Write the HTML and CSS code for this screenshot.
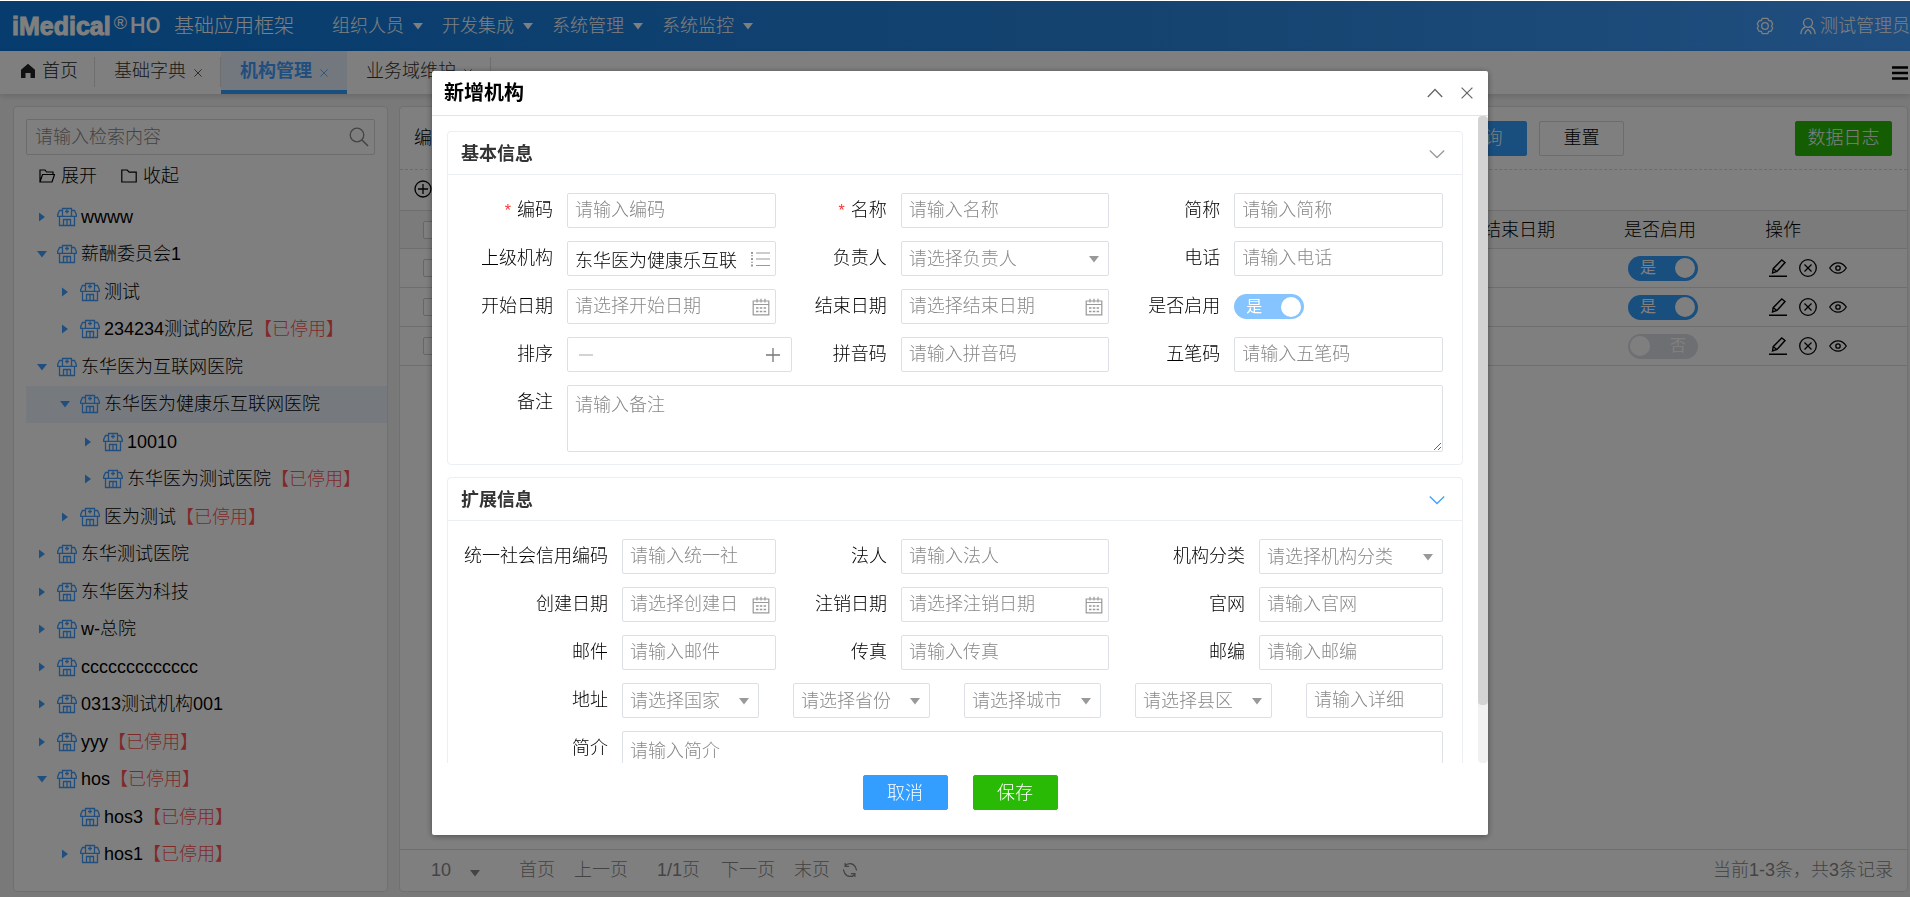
FILE: index.html
```html
<!DOCTYPE html>
<html lang="zh-CN">
<head>
<meta charset="utf-8">
<title>机构管理</title>
<link rel="stylesheet" href="styles.css">
</head>
<body>
<svg class="sprite" aria-hidden="true">
  <symbol id="i-hospital" viewBox="0 0 20 20"><path d="M5.500 7.500v-6h9v6M10 2.500v4M8 4.500h4M5.500 3.500H2.500L.7 7.500v1.800h18.600V7.500l-1.800-4h-3M5.500 7.500v1.800M14.500 7.500v1.800M2.500 9.500v9h15v-9M6.500 18.500v-6h7v6M10 12.500v6" fill="none" stroke="currentColor" stroke-width="1.300"/></symbol>
  <symbol id="i-right" viewBox="0 0 10 10"><path d="M2 .5 8 5 2 9.500z" fill="currentColor"/></symbol>
  <symbol id="i-down" viewBox="0 0 10 10"><path d="M0 2h10L5 8.500z" fill="currentColor"/></symbol>
  <symbol id="i-home" viewBox="0 0 16 16"><path d="M8 .8 1 6.800V15h4.500v-5h5v5H15V6.800z" fill="currentColor"/></symbol>
  <symbol id="i-x" viewBox="0 0 12 12"><path d="m.6.6 10.800 10.800M11.400.6.6 11.400" fill="none" stroke="currentColor" stroke-width="1.200"/></symbol>
  <symbol id="i-search" viewBox="0 0 20 20"><circle cx="8" cy="8" r="6.800" fill="none" stroke="currentColor" stroke-width="1.300"/><path d="m13 13 6 6" stroke="currentColor" stroke-width="1.600"/></symbol>
  <symbol id="i-open" viewBox="0 0 16 16"><path d="M1 14V2h5l1.500 2H14v2.500M1 14l2.500-7.500h12L13 14z" fill="none" stroke="currentColor" stroke-width="1.200"/></symbol>
  <symbol id="i-folder" viewBox="0 0 16 16"><path d="M.8 2h5.400l2 2.200h7V14H.8z" fill="none" stroke="currentColor" stroke-width="1.200"/></symbol>
  <symbol id="i-gear" viewBox="0 0 18 18"><path d="M6.300 1.300h5.400l1 2.200 2.300.3 1.700 3.200-1.200 2 1.200 2-1.700 3.200-2.300.3-1 2.200H6.300l-1-2.200-2.300-.3L1.300 11l1.200-2-1.200-2L3 3.800l2.300-.3z" fill="none" stroke="currentColor" stroke-width="1.300" stroke-linejoin="round"/><circle cx="9" cy="9" r="3.300" fill="none" stroke="currentColor" stroke-width="1.300"/></symbol>
  <symbol id="i-user" viewBox="0 0 18 20"><circle cx="9" cy="6.500" r="5" fill="none" stroke="currentColor" stroke-width="1.500"/><path d="M1 19c.2-3.500 2-6.500 5-8M17 19c-.2-3.500-2-6.500-5-8M5.500 19c.3-2 1.500-4 3.500-5 2 1 3.200 3 3.500 5" fill="none" stroke="currentColor" stroke-width="1.500"/></symbol>
  <symbol id="i-menu" viewBox="0 0 16 14"><path d="M0 1.500h16M0 7h16M0 12.500h16" stroke="currentColor" stroke-width="2.400"/></symbol>
  <symbol id="i-plus-c" viewBox="0 0 18 18"><circle cx="9" cy="9" r="8" fill="none" stroke="currentColor" stroke-width="1.300"/><path d="M9 4v10M4 9h10" stroke="currentColor" stroke-width="1.300"/></symbol>
  <symbol id="i-edit" viewBox="0 0 18 18"><path d="m3.500 14 .7-4.300L12.800 1l3.200 2.500-8 9zM4.200 9.700 8 12.500M0 17.300h18" fill="none" stroke="currentColor" stroke-width="1.400"/></symbol>
  <symbol id="i-x-c" viewBox="0 0 18 18"><circle cx="9" cy="9" r="8.300" fill="none" stroke="currentColor" stroke-width="1.300"/><path d="m5.500 5.500 7 7M12.500 5.500l-7 7" stroke="currentColor" stroke-width="1.300"/></symbol>
  <symbol id="i-eye" viewBox="0 0 18 18"><path d="M.7 9C3 5.500 5.800 3.800 9 3.800S15 5.500 17.300 9C15 12.500 12.200 14.200 9 14.200S3 12.500.7 9z" fill="none" stroke="currentColor" stroke-width="1.300"/><circle cx="9" cy="9" r="2.200" fill="none" stroke="currentColor" stroke-width="1.300"/></symbol>
  <symbol id="i-refresh" viewBox="0 0 18 18"><path d="M14.800 13.500A7 7 0 0 1 3 12.500L1.500 8.500M3.200 4.500A7 7 0 0 1 15 5.500l1.500 4M3.500 1v4H8M14.500 17v-4H10" fill="none" stroke="currentColor" stroke-width="1.400"/></symbol>
  <symbol id="i-chev-up" viewBox="0 0 16 16"><path d="m.8 12 7.200-7.500L15.200 12" fill="none" stroke="currentColor" stroke-width="1.300"/></symbol>
  <symbol id="i-chev-down" viewBox="0 0 16 16"><path d="m.8 4.500 7.200 7 7.200-7" fill="none" stroke="currentColor" stroke-width="1.300"/></symbol>
  <symbol id="i-list" viewBox="0 0 20 18"><path d="M6 3h14M6 9h14M6 15.500h14" stroke="currentColor" stroke-width="1.200"/><path d="M1 2h2v2H1zM1 8h2v2H1zM1 14.500h2v2H1zM1 5.300h2v1H1zM1 11.700h2v1H1z" fill="currentColor"/></symbol>
  <symbol id="i-cal" viewBox="0 0 18 18"><path d="M1.200 3h15.600v13.800H1.200zM1.200 6.500h15.600M5 .8v3.700M9 .8v3.700M13 .8v3.700" fill="none" stroke="currentColor" stroke-width="1.200"/><path d="M4 10h2.500M7.800 10h2.500M11.600 10h2.500M4 13.500h2.500M7.800 13.500h2.500M11.600 13.500h2.500" stroke="currentColor" stroke-width="1.300"/></symbol>
  <symbol id="i-minus" viewBox="0 0 14 14"><path d="M0 7h14" stroke="currentColor" stroke-width="1.300"/></symbol>
  <symbol id="i-plus" viewBox="0 0 14 14"><path d="M0 7h14M7 0v14" stroke="currentColor" stroke-width="1.300"/></symbol>
</svg>

<header class="topbar">
  <div class="brand"><span class="brand-name">iMedical</span><span class="brand-mark">®</span><span class="brand-suffix">HO</span></div>
  <h1 class="app-title">基础应用框架</h1>
  <nav class="main-nav">
    <button class="nav-item">组织人员<svg class="caret"><use href="#i-down"/></svg></button>
    <button class="nav-item">开发集成<svg class="caret"><use href="#i-down"/></svg></button>
    <button class="nav-item">系统管理<svg class="caret"><use href="#i-down"/></svg></button>
    <button class="nav-item">系统监控<svg class="caret"><use href="#i-down"/></svg></button>
  </nav>
  <button class="nav-item settings" aria-label="设置"><svg class="icon18"><use href="#i-gear"/></svg></button>
  <button class="nav-item user"><svg class="icon18"><use href="#i-user"/></svg>测试管理员</button>
</header>

<div class="tabs">
  <a class="tab tab-home" href="#"><svg class="icon16"><use href="#i-home"/></svg>首页</a>
  <a class="tab" href="#">基础字典<svg class="tab-x"><use href="#i-x"/></svg></a>
  <a class="tab active" href="#">机构管理<svg class="tab-x"><use href="#i-x"/></svg></a>
  <a class="tab" href="#">业务域维护<svg class="tab-x"><use href="#i-x"/></svg></a>
  <button class="tabs-menu" aria-label="菜单"><svg class="icon16"><use href="#i-menu"/></svg></button>
</div>

<main class="workspace">
  <aside class="panel tree-panel">
    <div class="search">
      <input class="search-input" type="text" placeholder="请输入检索内容" aria-label="检索">
      <svg class="icon20"><use href="#i-search"/></svg>
    </div>
    <div class="tree-tools">
      <button class="tool"><svg class="icon16"><use href="#i-open"/></svg>展开</button>
      <button class="tool"><svg class="icon16"><use href="#i-folder"/></svg>收起</button>
    </div>
    <ul class="tree">
      <li class="node"><svg class="arrow"><use href="#i-right"/></svg><svg class="icon20 org"><use href="#i-hospital"/></svg>wwww</li>
      <li class="node"><svg class="arrow"><use href="#i-down"/></svg><svg class="icon20 org"><use href="#i-hospital"/></svg>薪酬委员会1</li>
      <li class="node l1"><svg class="arrow"><use href="#i-right"/></svg><svg class="icon20 org"><use href="#i-hospital"/></svg>测试</li>
      <li class="node l1"><svg class="arrow"><use href="#i-right"/></svg><svg class="icon20 org"><use href="#i-hospital"/></svg>234234测试的欧尼<span class="off">【已停用】</span></li>
      <li class="node"><svg class="arrow"><use href="#i-down"/></svg><svg class="icon20 org"><use href="#i-hospital"/></svg>东华医为互联网医院</li>
      <li class="node l1 selected"><svg class="arrow"><use href="#i-down"/></svg><svg class="icon20 org"><use href="#i-hospital"/></svg>东华医为健康乐互联网医院</li>
      <li class="node l2"><svg class="arrow"><use href="#i-right"/></svg><svg class="icon20 org"><use href="#i-hospital"/></svg>10010</li>
      <li class="node l2"><svg class="arrow"><use href="#i-right"/></svg><svg class="icon20 org"><use href="#i-hospital"/></svg>东华医为测试医院<span class="off">【已停用】</span></li>
      <li class="node l1"><svg class="arrow"><use href="#i-right"/></svg><svg class="icon20 org"><use href="#i-hospital"/></svg>医为测试<span class="off">【已停用】</span></li>
      <li class="node"><svg class="arrow"><use href="#i-right"/></svg><svg class="icon20 org"><use href="#i-hospital"/></svg>东华测试医院</li>
      <li class="node"><svg class="arrow"><use href="#i-right"/></svg><svg class="icon20 org"><use href="#i-hospital"/></svg>东华医为科技</li>
      <li class="node"><svg class="arrow"><use href="#i-right"/></svg><svg class="icon20 org"><use href="#i-hospital"/></svg>w-总院</li>
      <li class="node"><svg class="arrow"><use href="#i-right"/></svg><svg class="icon20 org"><use href="#i-hospital"/></svg>ccccccccccccc</li>
      <li class="node"><svg class="arrow"><use href="#i-right"/></svg><svg class="icon20 org"><use href="#i-hospital"/></svg>0313测试机构001</li>
      <li class="node"><svg class="arrow"><use href="#i-right"/></svg><svg class="icon20 org"><use href="#i-hospital"/></svg>yyy<span class="off">【已停用】</span></li>
      <li class="node"><svg class="arrow"><use href="#i-down"/></svg><svg class="icon20 org"><use href="#i-hospital"/></svg>hos<span class="off">【已停用】</span></li>
      <li class="node l1"><svg class="arrow"></svg><svg class="icon20 org"><use href="#i-hospital"/></svg>hos3<span class="off">【已停用】</span></li>
      <li class="node l1"><svg class="arrow"><use href="#i-right"/></svg><svg class="icon20 org"><use href="#i-hospital"/></svg>hos1<span class="off">【已停用】</span></li>
    </ul>
  </aside>

  <section class="panel list-panel">
    <form class="query">
      <label class="query-field">编码<input class="ctl" type="text"></label>
      <button type="button" class="btn primary">查询</button>
      <button type="button" class="btn">重置</button>
      <button type="button" class="btn success log">数据日志</button>
    </form>
    <div class="list-tools"><button class="tool"><svg class="icon18"><use href="#i-plus-c"/></svg>新增</button></div>
    <div class="table-wrap">
      <table class="grid">
        <colgroup><col class="c-check"><col><col class="c-std"><col class="c-std"><col class="c-ops"></colgroup>
        <thead><tr><th class="check"><input class="box" type="checkbox" aria-label="全选"></th><th></th><th>结束日期</th><th>是否启用</th><th>操作</th></tr></thead>
        <tbody>
          <tr><td class="check"><input class="box" type="checkbox" aria-label="选择"></td><td></td><td></td>
            <td><label class="switch on"><input type="checkbox" checked><span>是</span><i></i></label></td>
            <td><div class="ops"><button aria-label="编辑"><svg class="icon18"><use href="#i-edit"/></svg></button><button aria-label="停用"><svg class="icon18"><use href="#i-x-c"/></svg></button><button aria-label="查看"><svg class="icon18"><use href="#i-eye"/></svg></button></div></td></tr>
          <tr><td class="check"><input class="box" type="checkbox" aria-label="选择"></td><td></td><td></td>
            <td><label class="switch on"><input type="checkbox" checked><span>是</span><i></i></label></td>
            <td><div class="ops"><button aria-label="编辑"><svg class="icon18"><use href="#i-edit"/></svg></button><button aria-label="停用"><svg class="icon18"><use href="#i-x-c"/></svg></button><button aria-label="查看"><svg class="icon18"><use href="#i-eye"/></svg></button></div></td></tr>
          <tr><td class="check"><input class="box" type="checkbox" aria-label="选择"></td><td></td><td></td>
            <td><label class="switch"><input type="checkbox"><i></i><span>否</span></label></td>
            <td><div class="ops"><button aria-label="编辑"><svg class="icon18"><use href="#i-edit"/></svg></button><button aria-label="停用"><svg class="icon18"><use href="#i-x-c"/></svg></button><button aria-label="查看"><svg class="icon18"><use href="#i-eye"/></svg></button></div></td></tr>
        </tbody>
      </table>
    </div>
    <footer class="pager">
      <span class="page-size"><select aria-label="每页条数"><option>10</option></select><svg class="caret"><use href="#i-down"/></svg></span>
      <button>首页</button><button>上一页</button><span class="page-now">1/1页</span><button>下一页</button><button>末页</button>
      <button class="reload" aria-label="刷新"><svg class="icon16"><use href="#i-refresh"/></svg></button>
      <span class="total">当前1-3条，共3条记录</span>
    </footer>
  </section>
</main>

<div class="overlay">
  <div class="dialog" role="dialog" aria-labelledby="dlg-title">
    <header class="dialog-head">
      <h2 id="dlg-title">新增机构</h2>
      <button aria-label="收起"><svg class="icon16"><use href="#i-chev-up"/></svg></button>
      <button aria-label="关闭"><svg class="icon12"><use href="#i-x"/></svg></button>
    </header>
    <div class="dialog-body">
      <form class="cards">
        <section class="card">
          <header class="card-head"><h3>基本信息</h3><svg class="icon16"><use href="#i-chev-down"/></svg></header>
          <div class="fields basic">
            <label for="code" class="req">编码</label><input id="code" class="ctl" type="text" placeholder="请输入编码">
            <label for="name" class="req">名称</label><input id="name" class="ctl" type="text" placeholder="请输入名称">
            <label for="short">简称</label><input id="short" class="ctl" type="text" placeholder="请输入简称">

            <label for="parent">上级机构</label><div class="combo"><input id="parent" class="ctl" type="text" value="东华医为健康乐互联网医院"><svg class="icon20"><use href="#i-list"/></svg></div>
            <label for="owner">负责人</label><div class="combo"><select id="owner" class="ctl"><option>请选择负责人</option></select><svg class="caret"><use href="#i-down"/></svg></div>
            <label for="tel">电话</label><input id="tel" class="ctl" type="text" placeholder="请输入电话">

            <label for="start">开始日期</label><div class="combo"><input id="start" class="ctl" type="text" placeholder="请选择开始日期"><svg class="icon18"><use href="#i-cal"/></svg></div>
            <label for="end">结束日期</label><div class="combo"><input id="end" class="ctl" type="text" placeholder="请选择结束日期"><svg class="icon18"><use href="#i-cal"/></svg></div>
            <label for="enabled">是否启用</label><label class="switch on soft"><input id="enabled" type="checkbox" checked disabled><span>是</span><i></i></label>

            <label for="sort">排序</label><div class="stepper"><button type="button" class="dim" aria-label="减少"><svg class="icon14"><use href="#i-minus"/></svg></button><input id="sort" type="text"><button type="button" aria-label="增加"><svg class="icon14"><use href="#i-plus"/></svg></button></div>
            <label for="py">拼音码</label><input id="py" class="ctl" type="text" placeholder="请输入拼音码">
            <label for="wb">五笔码</label><input id="wb" class="ctl" type="text" placeholder="请输入五笔码">

            <label for="memo">备注</label><textarea id="memo" class="ctl wide" placeholder="请输入备注"></textarea>
          </div>
        </section>
        <section class="card">
          <header class="card-head hot"><h3>扩展信息</h3><svg class="icon16"><use href="#i-chev-down"/></svg></header>
          <div class="fields extra">
            <label for="uscc">统一社会信用编码</label><input id="uscc" class="ctl" type="text" placeholder="请输入统一社会信用编码">
            <label for="legal">法人</label><input id="legal" class="ctl" type="text" placeholder="请输入法人">
            <label for="kind">机构分类</label><div class="combo"><select id="kind" class="ctl"><option>请选择机构分类</option></select><svg class="caret"><use href="#i-down"/></svg></div>

            <label for="created">创建日期</label><div class="combo"><input id="created" class="ctl" type="text" placeholder="请选择创建日期"><svg class="icon18"><use href="#i-cal"/></svg></div>
            <label for="closed">注销日期</label><div class="combo"><input id="closed" class="ctl" type="text" placeholder="请选择注销日期"><svg class="icon18"><use href="#i-cal"/></svg></div>
            <label for="site">官网</label><input id="site" class="ctl" type="text" placeholder="请输入官网">

            <label for="mail">邮件</label><input id="mail" class="ctl" type="text" placeholder="请输入邮件">
            <label for="fax">传真</label><input id="fax" class="ctl" type="text" placeholder="请输入传真">
            <label for="zip">邮编</label><input id="zip" class="ctl" type="text" placeholder="请输入邮编">

            <label for="country">地址</label>
            <div class="address wide">
              <div class="combo"><select id="country" class="ctl"><option>请选择国家</option></select><svg class="caret"><use href="#i-down"/></svg></div>
              <div class="combo"><select class="ctl" aria-label="省份"><option>请选择省份</option></select><svg class="caret"><use href="#i-down"/></svg></div>
              <div class="combo"><select class="ctl" aria-label="城市"><option>请选择城市</option></select><svg class="caret"><use href="#i-down"/></svg></div>
              <div class="combo"><select class="ctl" aria-label="县区"><option>请选择县区</option></select><svg class="caret"><use href="#i-down"/></svg></div>
              <input class="ctl" type="text" aria-label="详细地址" placeholder="请输入详细地址">
            </div>

            <label for="intro">简介</label><textarea id="intro" class="ctl wide" placeholder="请输入简介"></textarea>
          </div>
        </section>
      </form>
      <div class="scrollbar"><div class="thumb"></div></div>
    </div>
    <footer class="dialog-foot">
      <button class="btn primary">取消</button>
      <button class="btn success">保存</button>
    </footer>
  </div>
</div>
</body>
</html>
```
FILE: styles.css
```css
* { box-sizing: border-box; }

body {
  margin: 0;
  padding-top: 1px;
  height: 100vh;
  display: flex;
  flex-direction: column;
  overflow: hidden;
  background: #fff;
  color: #000;
  font: 300 18px/24px "Liberation Sans", "Noto Sans CJK SC", sans-serif;
}

button, input, select, textarea { font: inherit; color: inherit; }
button { border: 0; padding: 0; background: none; cursor: pointer; }
h1, h2, h3, ul { margin: 0; padding: 0; }
svg { display: block; flex: none; }
a { color: inherit; text-decoration: none; }

.sprite { position: absolute; width: 0; height: 0; }
.icon12 { width: 12px; height: 12px; }
.icon14 { width: 14px; height: 14px; }
.icon16 { width: 16px; height: 16px; }
.icon18 { width: 18px; height: 18px; }
.icon20 { width: 20px; height: 20px; }
.caret { width: 10px; height: 10px; }

/* top bar */
.topbar {
  flex: none;
  height: 50px;
  display: flex;
  align-items: center;
  padding: 0 0 0 12px;
  color: #fff;
  background: linear-gradient(90deg, #0c78dc, #2a87e0 60%, #409eff);
}
.brand { display: flex; align-items: center; width: 162px; }
.brand-name { font: 900 25px/24px "Liberation Sans", sans-serif; -webkit-text-stroke: 1px #fff; }
.brand-mark { font-size: 18px; line-height: 18px; align-self: flex-start; margin-left: 3px; }
.brand-suffix { font: 500 22px/24px Roboto, sans-serif; margin-left: 3px; }
.app-title { font-size: 20px; font-weight: 300; width: 158px; }
.main-nav { display: flex; flex: 1; }
.nav-item { display: flex; align-items: center; gap: 9px; width: 110px; }
.settings { width: 43px; }
.user { width: auto; gap: 3px; }

/* page tabs */
.tabs {
  flex: none;
  height: 43px;
  display: flex;
  align-items: stretch;
  background: #fff;
  box-shadow: 0 2px 6px rgba(0, 0, 0, .15);
  color: #333;
  position: relative;
}
.tab {
  display: flex;
  align-items: center;
  gap: 8px;
  padding: 0 19px;
  border-bottom: 4px solid transparent;
  background: linear-gradient(#ddd, #ddd) right 6px / 1px 30px no-repeat;
}
.tab-home { gap: 6px; color: #222; padding: 0 17px 0 20px; }
.tab-x { width: 8px; height: 8px; margin-top: 4px; }
.tab.active { color: #409eff; font-weight: 700; background: #e6f1fd; border-bottom-color: #339eff; }
.tabs-menu { margin: 0 2px 0 auto; color: #000; }

/* workspace */
.workspace {
  flex: 1;
  min-height: 0;
  display: flex;
  gap: 11px;
  padding: 12px 2px 5px 13px;
  background: #f3f3f3;
}
.panel { display: flex; flex-direction: column; background: #fff; border: 1px solid #e0e0e0; border-radius: 4px; }
.tree-panel { flex: none; width: 375px; padding: 12px 0 18px 12px; }
.search { display: flex; align-items: center; height: 36px; margin-right: 12px; padding: 0 5px 0 8px; border: 1px solid #d8d8d8; border-radius: 2px; color: #888; }
.search-input { flex: 1; min-width: 0; border: 0; padding: 0; background: none; outline: 0; }
.search-input::placeholder { color: #888; opacity: 1; }
.tree-tools { display: flex; gap: 24px; padding: 9px 0 10px 13px; }
.tool { display: flex; align-items: center; gap: 6px; white-space: nowrap; }
.tree { flex: 1; display: grid; grid-auto-rows: 1fr; list-style: none; }
.node { display: flex; align-items: center; padding-left: 11px; white-space: nowrap; }
.node.l1 { padding-left: 34px; }
.node.l2 { padding-left: 57px; }
.node.selected { background: #edf5ff; }
.arrow { width: 10px; height: 10px; margin-right: 10px; color: #409eff; }
.org { margin-right: 4px; color: #409eff; }
.off { color: #ff5252; }

.list-panel { flex: 1; min-width: 0; }
.query { display: flex; align-items: center; height: 63px; padding: 0 15px 0 14px; border-bottom: 1px dashed #d8d8d8; }
.query-field { flex: 1; display: flex; align-items: center; gap: 14px; margin-right: 40px; white-space: nowrap; }
.btn { flex: none; width: 85px; height: 35px; border: 1px solid #d8d8d8; border-radius: 2px; }
.btn + .btn { margin-left: 12px; }
.btn.primary { background: #339eff; border-color: #339eff; color: #fff; }
.btn.success { background: #28ba05; border-color: #28ba05; color: #fff; }
.btn.log { width: 97px; margin-left: 171px; }
.list-tools { display: flex; align-items: center; height: 40px; padding: 0 14px 2px; }
.table-wrap { flex: 1; }
.grid { width: 100%; table-layout: fixed; border-collapse: collapse; border-top: 1px solid #dcdcdc; }
.c-check { width: 61px; }
.c-std { width: 141px; }
.c-ops { width: 150px; }
.grid th { height: 38px; padding: 0 8px; text-align: left; font-weight: 300; background: #f7f7f7; border-bottom: 1px solid #dcdcdc; }
.grid td { height: 39px; padding: 0 12px; border-bottom: 1px solid #dcdcdc; }
.grid .check { padding: 0 0 0 23px; }
.box { appearance: none; display: block; width: 18px; height: 18px; margin: 0; border: 1px solid #ccc; border-radius: 2px; background: #fff; }
.ops { display: flex; gap: 12px; }
.pager { display: flex; align-items: center; height: 42px; padding: 0 14px 2px 31px; border-top: 1px solid #dcdcdc; color: #888; }
.pager button + button { margin-left: 19px; }
.page-size { display: flex; align-items: center; width: 88px; gap: 18px; }
.page-size select { appearance: none; border: 0; padding: 0; background: none; }
.page-size .caret { margin-top: 6px; }
.pager .page-now { margin: 0 21px 0 29px; }
.pager .reload { margin-left: 12px; }
.total { margin-left: auto; }

/* switch */
.switch { display: flex; align-items: center; justify-content: space-between; width: 70px; height: 25px; padding: 0 3px 0 12px; border-radius: 13px; background: #dcdfe6; color: #fff; font-size: 16px; font-weight: 400; }
.switch:not(.on) { padding: 0 12px 0 2px; }
.switch.on { background: #339eff; }
.switch.on.soft { background: #85c4ff; }
.switch input { appearance: none; width: 0; height: 0; margin: 0; position: absolute; }
.switch i { width: 20px; height: 20px; border-radius: 50%; background: #fff; }

/* dialog */
.overlay { position: fixed; inset: 1px 0 0; padding: 70px 20px 62px 30px; background: rgba(0, 0, 0, .5); display: flex; justify-content: center; }
.dialog { display: flex; flex-direction: column; width: 1056px; max-width: 100%; background: #fff; border-radius: 2px; box-shadow: 0 1px 6px rgba(0, 0, 0, .4); }
.dialog-head { flex: none; display: flex; align-items: center; gap: 18px; height: 45px; padding: 0 15px 1px 12px; border-bottom: 1px solid #e4e4e4; color: #666; }
.dialog-head h2 { flex: 1; color: #000; font-size: 20px; font-weight: 700; }
.dialog-body { flex: 1; min-height: 0; display: flex; }
.cards { flex: 1; min-width: 0; overflow: hidden; padding: 15px; display: flex; flex-direction: column; gap: 12px; }
.scrollbar { flex: none; width: 10px; border-radius: 4px; background: #f1f1f1; }
.thumb { height: 91%; border-radius: 4px; background: #d3d3d3; }
.card { flex: none; border: 1px solid #ebeef5; border-radius: 4px; }
.card-head { display: flex; align-items: center; justify-content: space-between; height: 43px; padding: 1px 17px 0 13px; border-bottom: 1px solid #ebeef5; color: #999; }
.card-head.hot { color: #409eff; }
.card-head h3 { font-size: 18px; font-weight: 700; color: #333; }
.fields { display: grid; gap: 13px 14px; padding: 18px 19px 12px 0; align-items: center; }
.fields.basic { grid-template-columns: 105px minmax(0, 1fr) 97px minmax(0, 1fr) 97px minmax(0, 1fr); }
.fields.extra { grid-template-columns: 160px minmax(0, 154fr) 97px minmax(0, 208fr) 122px minmax(0, 184fr); }
.fields > label:not(.switch) { text-align: right; white-space: nowrap; height: 35px; line-height: 34px; align-self: start; }
.req::before { content: "*"; margin-right: 6px; color: #f33; font-size: 16px; }
.wide { grid-column: 2 / -1; }
.ctl { display: block; width: 100%; min-width: 0; height: 35px; padding: 0 37px 0 7px; border: 1px solid #dcdfe6; border-radius: 2px; background: #fff; outline: 0; }
.ctl::placeholder { color: #888; opacity: 1; }
textarea.ctl { height: 67px; padding: 7px; resize: vertical; }
select.ctl { appearance: none; padding-right: 24px; }
.combo { position: relative; min-width: 0; color: #999; }
.combo .ctl { color: #000; }
.combo select.ctl { color: #888; }
.combo svg { position: absolute; right: 6px; top: 0; bottom: 0; margin: auto 0; }
.combo .caret { right: 10px; }
.stepper { display: flex; align-items: center; height: 35px; margin-right: -16px; padding: 0 11px; border: 1px solid #dcdfe6; border-radius: 2px; background: #fff; color: #777; }
.stepper input { flex: 1; min-width: 0; border: 0; background: none; outline: 0; }
.stepper .dim { color: #bbb; }
.address { display: grid; grid-template-columns: repeat(5, minmax(0, 1fr)); gap: 34px; }
.dialog-foot { flex: none; display: flex; justify-content: center; gap: 13px; padding: 12px 0 25px; }
```
